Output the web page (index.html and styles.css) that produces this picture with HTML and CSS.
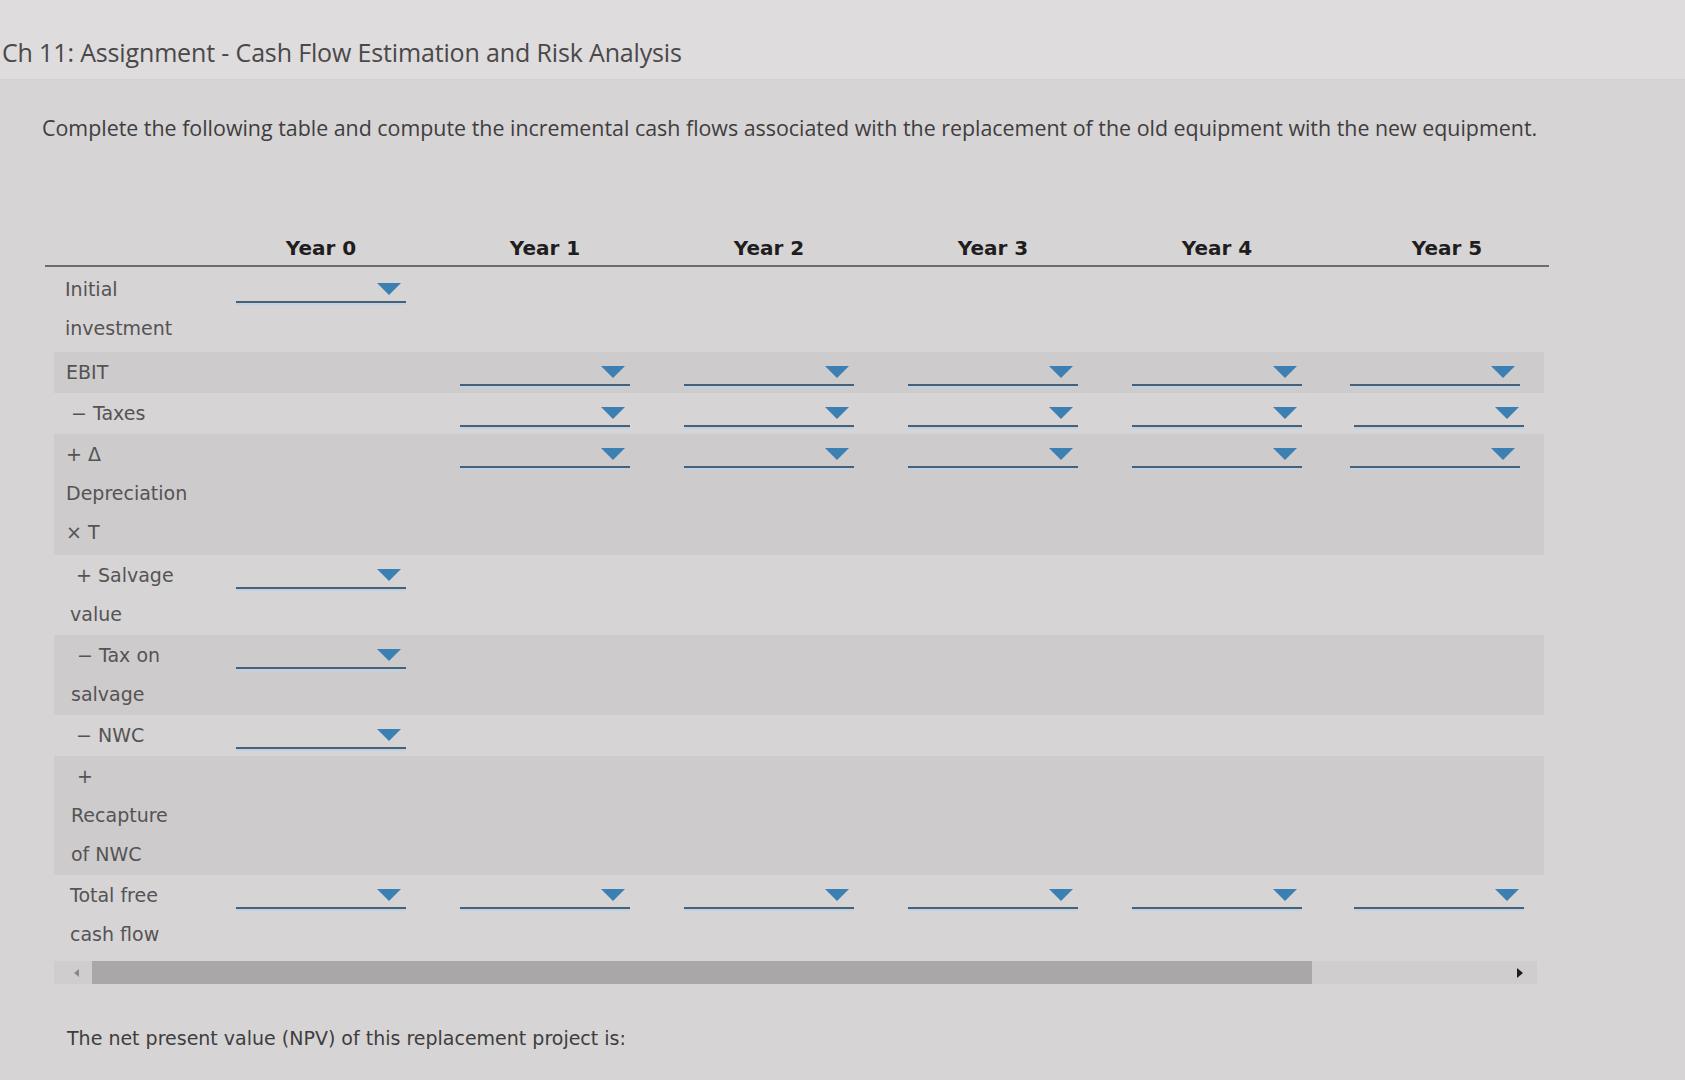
FILE: index.html
```html
<!DOCTYPE html>
<html>
<head>
<meta charset="utf-8">
<link rel="stylesheet" href="styles.css">
</head>
<body>
<header class="topbar">
  <h1 class="title">Ch 11: Assignment - Cash Flow Estimation and Risk Analysis</h1>
</header>
<p class="intro">Complete the following table and compute the incremental cash flows associated with the replacement of the old equipment with the new equipment.</p>

<div class="cf-table">
  <div class="row head">
    <div class="lbl"></div>
    <div class="yr">Year 0</div>
    <div class="yr">Year 1</div>
    <div class="yr">Year 2</div>
    <div class="yr">Year 3</div>
    <div class="yr">Year 4</div>
    <div class="yr">Year 5</div>
  </div>

  <div class="row first">
    <div class="lbl">Initial<br>investment</div>
    <div class="cell"><span class="dd"><i class="tri"></i></span></div>
    <div class="cell"></div><div class="cell"></div><div class="cell"></div><div class="cell"></div><div class="cell"></div>
  </div>

  <div class="row shade">
    <div class="lbl">EBIT</div>
    <div class="cell"></div>
    <div class="cell"><span class="dd"><i class="tri"></i></span></div>
    <div class="cell"><span class="dd"><i class="tri"></i></span></div>
    <div class="cell"><span class="dd"><i class="tri"></i></span></div>
    <div class="cell"><span class="dd"><i class="tri"></i></span></div>
    <div class="cell"><span class="dd"><i class="tri"></i></span></div>
  </div>

  <div class="row">
    <div class="lbl">&nbsp;− Taxes</div>
    <div class="cell"></div>
    <div class="cell"><span class="dd"><i class="tri"></i></span></div>
    <div class="cell"><span class="dd"><i class="tri"></i></span></div>
    <div class="cell"><span class="dd"><i class="tri"></i></span></div>
    <div class="cell"><span class="dd"><i class="tri"></i></span></div>
    <div class="cell"><span class="dd"><i class="tri"></i></span></div>
  </div>

  <div class="row shade tall">
    <div class="lbl">+ Δ<br>Depreciation<br>× T</div>
    <div class="cell"></div>
    <div class="cell"><span class="dd"><i class="tri"></i></span></div>
    <div class="cell"><span class="dd"><i class="tri"></i></span></div>
    <div class="cell"><span class="dd"><i class="tri"></i></span></div>
    <div class="cell"><span class="dd"><i class="tri"></i></span></div>
    <div class="cell"><span class="dd"><i class="tri"></i></span></div>
  </div>

  <div class="row">
    <div class="lbl lower">&nbsp;+ Salvage<br>value</div>
    <div class="cell"><span class="dd"><i class="tri"></i></span></div>
    <div class="cell"></div><div class="cell"></div><div class="cell"></div><div class="cell"></div><div class="cell"></div>
  </div>

  <div class="row shade">
    <div class="lbl lower">&nbsp;− Tax on<br>salvage</div>
    <div class="cell"><span class="dd"><i class="tri"></i></span></div>
    <div class="cell"></div><div class="cell"></div><div class="cell"></div><div class="cell"></div><div class="cell"></div>
  </div>

  <div class="row">
    <div class="lbl lower">&nbsp;− NWC</div>
    <div class="cell"><span class="dd"><i class="tri"></i></span></div>
    <div class="cell"></div><div class="cell"></div><div class="cell"></div><div class="cell"></div><div class="cell"></div>
  </div>

  <div class="row shade">
    <div class="lbl lower">&nbsp;+<br>Recapture<br>of NWC</div>
    <div class="cell"></div><div class="cell"></div><div class="cell"></div><div class="cell"></div><div class="cell"></div><div class="cell"></div>
  </div>

  <div class="row">
    <div class="lbl lower">Total free<br>cash flow</div>
    <div class="cell"><span class="dd"><i class="tri"></i></span></div>
    <div class="cell"><span class="dd"><i class="tri"></i></span></div>
    <div class="cell"><span class="dd"><i class="tri"></i></span></div>
    <div class="cell"><span class="dd"><i class="tri"></i></span></div>
    <div class="cell"><span class="dd"><i class="tri"></i></span></div>
    <div class="cell"><span class="dd"><i class="tri"></i></span></div>
  </div>

  <div class="hscroll">
    <span class="arr-l"></span>
    <span class="thumb"></span>
    <span class="arr-r"></span>
  </div>
</div>

<p class="npv">The net present value (NPV) of this replacement project is:</p>
</body>
</html>
```

FILE: styles.css
```css
html, body {
  margin: 0;
  padding: 0;
}
body {
  background: #d6d4d5;
  font-family: "DejaVu Sans", Verdana, sans-serif;
  color: #4e4c4d;
  width: 1685px;
  height: 1080px;
  overflow: hidden;
}
.topbar {
  background: #dedcdd;
  height: 80px;
  border-bottom: 1px solid #d2d0d1;
  box-sizing: border-box;
  padding-top: 36px;
}
.title {
  margin: 0;
  padding-left: 2px;
  font-family: "Open Sans", sans-serif;
  font-weight: 400;
  font-size: 25px;
  line-height: 32px;
  color: #4a4849;
  letter-spacing: -0.15px;
}
.intro {
  margin: 34px 0 0 42px;
  font-family: "Open Sans", sans-serif;
  font-size: 21.4px;
  line-height: 28px;
  color: #3f3d3e;
}
.cf-table {
  margin: 92px 0 0 45px;
  width: 1504px;
}
.row {
  display: grid;
  grid-template-columns: 164px repeat(5, 224px) 220px;
  padding: 1px 0;
}
.row.head {
  border-bottom: 2px solid #6e6c6d;
  height: 31px;
  padding: 0;
  margin-bottom: 3px;
  grid-template-columns: 164px repeat(5, 224px) 236px;
}
.row.first {
  padding: 0;
  height: 82px;
}
.row.shade {
  background: #cdcbcc;
  margin: 0 5px 0 9px;
  grid-template-columns: 155px repeat(5, 224px) 211px;
}
.row.tall {
  padding-bottom: 3px;
}
.yr {
  font-weight: bold;
  font-size: 20px;
  text-align: center;
  color: #1f1d1e;
  line-height: 28px;
}
.lbl {
  font-size: 19px;
  line-height: 39px;
  padding-left: 20px;
  color: #555354;
  white-space: nowrap;
}
.row.shade .lbl {
  padding-left: 12px;
}
.lbl.lower {
  padding-left: 25px;
}
.row.shade .lbl.lower {
  padding-left: 17px;
}
.cell {
  display: flex;
  justify-content: center;
  align-items: flex-start;
}
.dd {
  position: relative;
  display: block;
  width: 170px;
  height: 31px;
  border-bottom: 2px solid #4d5f70;
  box-shadow: 0 2px 0 #b9d4ea;
}
.tri {
  position: absolute;
  right: 5px;
  top: 13px;
  width: 0;
  height: 0;
  border-left: 12px solid transparent;
  border-right: 12px solid transparent;
  border-top: 12px solid #3b7fb3;
}
.hscroll {
  display: flex;
  align-items: center;
  height: 23px;
  margin: 6px 12px 0 9px;
  background: #cfcdce;
}
.arr-l {
  width: 0;
  height: 0;
  margin: 0 13px 0 20px;
  border-top: 4px solid transparent;
  border-bottom: 4px solid transparent;
  border-right: 5px solid #8a8889;
}
.thumb {
  width: 1220px;
  height: 23px;
  background: #a9a7a8;
}
.arr-r {
  width: 0;
  height: 0;
  margin-left: 205px;
  border-top: 5px solid transparent;
  border-bottom: 5px solid transparent;
  border-left: 6px solid #1f1d1e;
}
.npv {
  margin: 42px 0 0 67px;
  font-size: 19px;
  line-height: 24px;
  color: #3f3d3e;
}
```
